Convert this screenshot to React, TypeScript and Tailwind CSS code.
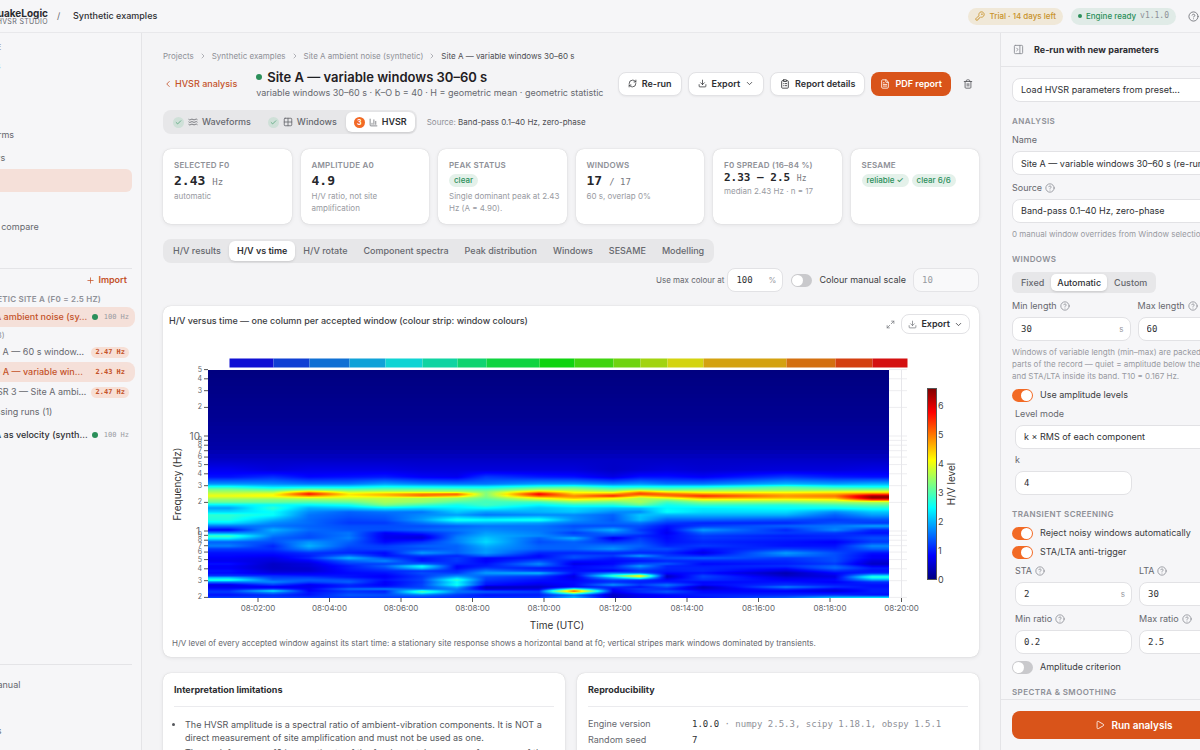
import type { ReactNode } from "react";
import {
  BarChart3,
  Check,
  ChevronDown,
  ChevronLeft,
  ChevronRight,
  ClipboardList,
  Download,
  FileText,
  Grid2x2,
  HelpCircle,
  KeyRound,
  Maximize2,
  PanelRightClose,
  Play,
  Plus,
  RefreshCw,
  Trash2,
  Waves,
} from "lucide-react";

const MONO = "font-['DejaVu_Sans_Mono',monospace]";

/* ---------- H/V vs time data ---------- */

// Start of each accepted window, in chart units
const WINDOW_X = [66, 110, 146, 186, 222, 259, 294, 323, 376, 411, 450, 477, 504, 540, 623, 672, 709];
const WINDOW_COLORS = [
  "#1010d4", "#1040d4", "#1070d4", "#10a2d8", "#10d4d4", "#10d4a2", "#10d470", "#10d440", "#10d410",
  "#40d410", "#70d410", "#a2d410", "#d4d410", "#d4a210", "#d47010", "#d44010", "#d41010",
];

// [y, level of each window in % of the colour scale]
const LEVELS: [number, number[]][] = [
  [30, [0, 0, 0, 0, 0, 0, 0, 0, 0, 0, 0, 0, 0, 0, 0, 0, 0]],
  [80, [2, 2, 2, 2, 2, 2, 2, 2, 2, 2, 2, 2, 2, 2, 2, 2, 2]],
  [108, [4, 4, 4, 4, 4, 4, 4, 4, 4, 4, 4, 4, 4, 4, 4, 4, 4]],
  [120, [7, 7, 7, 7, 7, 7, 7, 7, 7, 7, 7, 7, 7, 7, 7, 7, 7]],
  [130, [11, 9, 10, 10, 10, 9, 9, 9, 9, 9, 7, 8, 9, 8, 9, 9, 10]],
  [137, [14, 17, 13, 14, 15, 12, 11, 18, 15, 14, 10, 14, 14, 12, 18, 15, 14]],
  [144, [27, 26, 24, 24, 28, 25, 24, 24, 28, 28, 25, 27, 24, 24, 30, 28, 30]],
  [147, [40, 35, 36, 36, 39, 38, 37, 37, 43, 45, 39, 39, 39, 39, 46, 41, 39]],
  [150, [50, 46, 51, 48, 49, 49, 48, 46, 55, 54, 49, 54, 49, 51, 51, 51, 52]],
  [152, [54, 54, 72, 57, 58, 57, 56, 50, 72, 61, 58, 74, 64, 60, 60, 62, 62]],
  [154, [58, 61, 87, 65, 70, 76, 79, 50, 89, 68, 73, 82, 78, 73, 69, 71, 79]],
  [156, [61, 63, 74, 63, 68, 76, 70, 50, 80, 74, 85, 69, 76, 84, 73, 76, 97]],
  [158, [56, 56, 58, 58, 57, 55, 53, 48, 63, 70, 65, 55, 61, 72, 69, 71, 98]],
  [160, [51, 50, 51, 52, 55, 53, 50, 45, 54, 60, 57, 54, 50, 60, 59, 61, 80]],
  [162, [48, 48, 46, 48, 54, 52, 46, 44, 44, 52, 49, 54, 44, 51, 52, 54, 55]],
  [165, [36, 38, 37, 39, 50, 44, 39, 44, 37, 41, 41, 48, 39, 43, 41, 44, 47]],
  [168, [28, 42, 30, 32, 36, 34, 36, 38, 32, 34, 32, 32, 37, 36, 38, 38, 40]],
  [172, [34, 38, 26, 22, 24, 24, 32, 28, 30, 32, 26, 26, 38, 34, 34, 26, 32]],
  [175, [42, 38, 24, 21, 22, 26, 28, 24, 26, 26, 22, 32, 30, 30, 30, 22, 28]],
  [180, [40, 30, 23, 19, 20, 28, 40, 38, 40, 27, 21, 31, 22, 22, 20, 18, 20]],
  [183, [35, 26, 23, 18, 18, 24, 30, 30, 28, 24, 22, 24, 18, 16, 16, 20, 18]],
  [186, [24, 24, 22, 20, 20, 20, 22, 24, 24, 20, 20, 20, 14, 18, 22, 24, 28]],
  [190, [12, 30, 23, 21, 20, 22, 24, 26, 24, 22, 30, 18, 12, 28, 16, 26, 16]],
  [193, [26, 27, 21, 24, 12, 16, 22, 28, 25, 18, 24, 20, 11, 22, 18, 18, 14]],
  [196, [44, 24, 20, 24, 11, 10, 24, 30, 26, 22, 18, 16, 13, 18, 15, 16, 18]],
  [198, [38, 22, 20, 25, 11, 9, 25, 32, 22, 30, 10, 18, 13, 18, 16, 16, 20]],
  [202, [22, 20, 27, 22, 13, 17, 25, 34, 20, 22, 17, 20, 14, 16, 14, 12, 18]],
  [206, [25, 16, 30, 20, 18, 22, 22, 30, 22, 22, 24, 22, 16, 18, 14, 14, 26]],
  [209, [18, 17, 26, 18, 19, 20, 22, 28, 22, 22, 27, 20, 20, 14, 18, 16, 22]],
  [213, [14, 14, 17, 16, 13, 28, 22, 28, 16, 16, 16, 16, 16, 10, 28, 20, 14]],
  [216, [13, 12, 15, 24, 14, 18, 16, 22, 13, 20, 18, 28, 18, 16, 24, 20, 12]],
  [218, [12, 10, 16, 31, 20, 14, 18, 13, 14, 20, 15, 18, 20, 22, 18, 20, 12]],
  [221, [11, 9, 12, 22, 26, 14, 18, 12, 20, 14, 13, 14, 16, 16, 16, 20, 9]],
  [224, [14, 7, 9, 18, 19, 22, 16, 14, 26, 10, 13, 20, 21, 13, 15, 18, 7]],
  [226, [12, 7, 9, 15, 22, 38, 13, 15, 22, 13, 15, 28, 16, 15, 17, 22, 11]],
  [228, [12, 7, 8, 15, 20, 34, 13, 18, 15, 13, 16, 23, 16, 16, 14, 23, 15]],
  [231, [14, 8, 8, 14, 16, 18, 16, 24, 18, 14, 12, 17, 15, 16, 9, 17, 14]],
  [233, [13, 10, 11, 13, 14, 20, 18, 28, 31, 14, 24, 22, 13, 14, 5, 13, 16]],
  [236, [18, 17, 15, 14, 12, 18, 26, 22, 19, 10, 44, 66, 7, 19, 7, 10, 36]],
  [237, [28, 18, 18, 14, 12, 18, 30, 20, 17, 10, 34, 54, 7, 19, 9, 10, 42]],
  [240, [42, 22, 22, 20, 14, 19, 42, 18, 14, 12, 19, 18, 13, 17, 12, 13, 28]],
  [242, [24, 26, 19, 22, 12, 18, 37, 16, 13, 13, 17, 15, 15, 13, 14, 12, 17]],
  [245, [10, 18, 11, 16, 12, 19, 39, 14, 10, 13, 27, 18, 24, 13, 17, 15, 14]],
  [247, [11, 11, 11, 16, 15, 19, 30, 6, 7, 13, 17, 14, 20, 6, 25, 17, 14]],
  [249, [14, 18, 12, 23, 25, 22, 25, 8, 10, 40, 13, 18, 16, 8, 17, 12, 15]],
  [251, [17, 37, 12, 18, 16, 42, 24, 19, 17, 82, 12, 16, 20, 13, 12, 8, 15]],
  [252, [18, 28, 14, 18, 16, 45, 24, 21, 18, 68, 11, 17, 21, 13, 13, 11, 15]],
  [255, [14, 17, 14, 21, 20, 24, 18, 14, 15, 24, 7, 11, 13, 15, 16, 17, 14]],
  [258, [19, 19, 18, 18, 18, 18, 17, 17, 18, 32, 7, 11, 13, 14, 22, 34, 38]],
];

const clamp = (v: number) => Math.max(0, Math.min(1, v));

function jet(t: number) {
  const r = clamp(1.5 - Math.abs(4 * t - 3));
  const g = clamp(1.5 - Math.abs(4 * t - 2));
  const b = clamp(1.5 - Math.abs(4 * t - 1));
  return `rgb(${Math.round(r * 255)},${Math.round(g * 255)},${Math.round(b * 255)})`;
}

function levelsAt(y: number) {
  const i = Math.max(1, LEVELS.findIndex(([rowY]) => rowY >= y));
  const [y0, a] = LEVELS[i - 1];
  const [y1, b] = LEVELS[i];
  const f = clamp((y - y0) / (y1 - y0));
  return a.map((v, k) => (v + (b[k] - v) * f) / 100);
}

const PLOT_LEFT = 45;
const PLOT_RIGHT = 726;

function rowStops(y: number) {
  const levels = levelsAt(y);
  const stops: { offset: number; color: string }[] = [];
  WINDOW_X.forEach((x, k) => {
    const last = k === WINDOW_X.length - 1;
    const steps = last ? 1 : 5;
    for (let s = 0; s < steps; s++) {
      const f = s / steps;
      const px = last ? x : x + (WINDOW_X[k + 1] - x) * f;
      const v = last ? levels[k] : levels[k] + (levels[k + 1] - levels[k]) * f;
      stops.push({ offset: (px - PLOT_LEFT) / (PLOT_RIGHT - PLOT_LEFT), color: jet(v) });
    }
  });
  return stops;
}

const ROWS: { y: number; h: number }[] = [];
for (let y = 30; y < 258; ) {
  const h = y < 118 ? 4 : 1;
  ROWS.push({ y, h });
  y += h;
}

const freqY = (f: number) => 96 - 95 * (Math.log10(f) - 1);
const FREQ_TICKS = [
  50, 40, 30, 20, 10, 9, 8, 7, 6, 5, 4, 3, 2, 1, 0.9, 0.8, 0.7, 0.6, 0.5, 0.4, 0.3, 0.2,
];
const TIME_TICKS = ["02", "04", "06", "08", "10", "12", "14", "16", "18", "20"];

function HvTimeChart() {
  return (
    <svg viewBox="0 0 816 292" className="block w-full" role="img" aria-label="H/V versus time">
      <defs>
        {ROWS.map(({ y, h }) => (
          <linearGradient key={y} id={`row-${y}`} x1="0" x2="1" y1="0" y2="0">
            {rowStops(y + h / 2).map((s, i) => (
              <stop key={i} offset={s.offset} stopColor={s.color} />
            ))}
          </linearGradient>
        ))}
        <linearGradient id="scale" x1="0" x2="0" y1="1" y2="0">
          {[0, 0.125, 0.375, 0.625, 0.875, 1].map((t) => (
            <stop key={t} offset={t} stopColor={jet(t)} />
          ))}
        </linearGradient>
      </defs>

      {/* Grid, only visible right of the last window */}
      {FREQ_TICKS.map((f) => (
        <path key={f} d={`M726 ${freqY(f)}H744`} stroke="#ededf0" />
      ))}
      <path d="M738.5 30V258" stroke="#e6e6ea" />

      {/* Window colours */}
      {WINDOW_X.map((x, i) => (
        <rect
          key={x}
          x={x + 0.5}
          y={18.5}
          width={(WINDOW_X[i + 1] ?? 744) - x}
          height={9}
          fill={WINDOW_COLORS[i]}
        />
      ))}

      <g shapeRendering="crispEdges">
        {ROWS.map(({ y, h }) => (
          <rect
            key={y}
            x={PLOT_LEFT}
            y={y}
            width={PLOT_RIGHT - PLOT_LEFT}
            height={h}
            fill={`url(#row-${y})`}
          />
        ))}
      </g>

      {/* Frequency axis */}
      {FREQ_TICKS.map((f) => {
        const major = f === 10 || f === 1;
        const digit = f < 1 ? Math.round(f * 10) : f > 10 ? f / 10 : f;
        return (
          <g key={f}>
            <path d={`M41 ${freqY(f)}H45`} stroke="#555" />
            <text
              x={major ? 37 : 39}
              y={freqY(f) + (major ? 4 : 2)}
              textAnchor="end"
              fontSize={major ? 10 : 7}
              fill="#62656b"
            >
              {major ? f : digit}
            </text>
          </g>
        );
      })}
      <text transform="translate(18 144) rotate(-90)" textAnchor="middle" fontSize={10} fill="#333">
        Frequency (Hz)
      </text>

      {/* Time axis */}
      {TIME_TICKS.map((m, i) => {
        const x = 95 + i * 71.5;
        return (
          <g key={m}>
            <path d={`M${x} 258V262`} stroke="#555" />
            <text x={x} y={271} textAnchor="middle" fontSize={8} fill="#62656b">
              08:{m}:00
            </text>
          </g>
        );
      })}
      <text x={394} y={289} textAnchor="middle" fontSize={10} fill="#333">
        Time (UTC)
      </text>

      {/* Colour scale */}
      <rect x={764.5} y={48.5} width={9} height={191} fill="url(#scale)" stroke="#555" />
      {[0, 1, 2, 3, 4, 5, 6].map((v) => (
        <text key={v} x={775} y={243 - v * 29} fontSize={9} fill="#444">
          {v}
        </text>
      ))}
      <text transform="translate(792 144) rotate(-90)" textAnchor="middle" fontSize={10} fill="#333">
        H/V level
      </text>
    </svg>
  );
}

/* ---------- Small building blocks ---------- */

function Badge({ children }: { children: ReactNode }) {
  return (
    <span className="rounded-full bg-[#e4f1ea] px-[5px] text-[8px] leading-[13px] font-medium whitespace-nowrap text-[#2b8f5a]">
      {children}
    </span>
  );
}

type StatProps = { label: string; children: ReactNode; note?: string; tight?: boolean };

function Stat({ label, children, note, tight }: StatProps) {
  return (
    <div className="h-[75px] rounded-lg bg-white pt-[10px] pr-1 pl-[11px] shadow-[0_0_1px_rgba(0,0,0,0.2),0_1px_4px_rgba(0,0,0,0.08)]">
      <p className="text-[8px] leading-[12px] font-semibold tracking-wide whitespace-nowrap text-[#8e9097]">
        {label}
      </p>
      <div className={`flex items-center gap-[3px] ${tight ? "h-[14px]" : "h-[19px]"}`}>{children}</div>
      {note && <p className="text-[8px] leading-[12px] text-[#989aa1]">{note}</p>}
    </div>
  );
}

function Figure({ value, unit }: { value: string; unit?: string }) {
  return (
    <p className={`text-[13px] font-bold whitespace-nowrap text-[#26272b] ${MONO}`}>
      {value}
      {unit && <span className="ml-[7px] text-[9px] font-normal text-[#777980]">{unit}</span>}
    </p>
  );
}

function SmallButton({ children }: { children: ReactNode }) {
  return (
    <button className="flex h-6 items-center gap-[5px] rounded-lg border border-[#e2e2e5] bg-white px-[9px] text-[9px] font-semibold whitespace-nowrap text-[#2e2f33] shadow-xs">
      {children}
    </button>
  );
}

function Toggle({ label, on = false }: { label: string; on?: boolean }) {
  return (
    <label className="flex h-3 items-center gap-[7px] text-[9px] whitespace-nowrap text-[#3c3d42]">
      <input type="checkbox" role="switch" defaultChecked={on} className="peer sr-only" />
      <span className="h-[13px] w-[21px] rounded-full bg-[#c9c9cc] p-px peer-checked:bg-[#f26a25] peer-checked:*:translate-x-2">
        <span className="block size-[11px] rounded-full bg-white" />
      </span>
      {label}
    </label>
  );
}

const fieldClass =
  "block h-6 w-full appearance-none rounded-lg border border-[#e2e2e5] bg-white px-[8px] text-[9px] text-[#2e2f33] outline-none";

type FieldProps = {
  id: string;
  label: string;
  value: string;
  help?: boolean;
  unit?: string;
  mono?: boolean;
  select?: boolean;
};

function Field({ id, label, value, help, unit, mono, select }: FieldProps) {
  return (
    <div className="flex flex-col gap-[5px]">
      <label
        htmlFor={id}
        className="flex h-3 items-center gap-[3px] text-[9px] whitespace-nowrap text-[#66686e]"
      >
        {label}
        {help && <HelpCircle className="size-[10px] text-[#8e9097]" />}
      </label>
      <div className="relative">
        {select ? (
          <select id={id} className={fieldClass}>
            <option>{value}</option>
          </select>
        ) : (
          <input id={id} defaultValue={value} className={`${fieldClass} ${mono ? MONO : ""}`} />
        )}
        {unit && (
          <span className="absolute top-[6px] right-[7px] text-[8px] leading-[12px] text-[#989aa1]">
            {unit}
          </span>
        )}
      </div>
    </div>
  );
}

function SectionTitle({ children }: { children: ReactNode }) {
  return (
    <h3 className="text-[8px] leading-[12px] font-semibold tracking-wider text-[#8e9097]">
      {children}
    </h3>
  );
}

/* ---------- Page regions ---------- */

function TopBar() {
  return (
    <header className="flex h-[33px] shrink-0 items-center border-b border-[#e8e8eb] bg-[#f6f6f8] pr-[69px]">
      <div className="w-[118px] pt-[2px] text-right">
        <p className="text-[10px] leading-[9px] font-bold text-[#2b2c30]">QuakeLogic</p>
        <p className="text-[7px] leading-[8px] tracking-wider text-[#66686e]">HVSR STUDIO</p>
      </div>
      <span className="ml-[9px] w-4 text-[9px] text-[#66686e]">/</span>
      <p className="text-[9px] font-medium text-[#2e2f33]">Synthetic examples</p>
      <div className="ml-auto flex items-center gap-2 text-[8px] whitespace-nowrap">
        <span className="flex h-[17px] items-center gap-1 rounded-full bg-[#f0e8d8] px-[7px] font-medium text-[#c8922a]">
          <KeyRound className="size-[10px]" />
          Trial · 14 days left
        </span>
        <span className="flex h-[17px] items-center gap-[4px] rounded-full bg-[#e0ebe7] px-[7px] font-medium text-[#2b8f5a]">
          <i className="size-1 rounded-full bg-[#2b8f5a]" />
          Engine ready
          <span className={`font-normal text-[#8e9097] ${MONO}`}>v1.1.0</span>
        </span>
        <button aria-label="Help" className="ml-1">
          <HelpCircle className="size-[11px] text-[#77797f]" />
        </button>
      </div>
    </header>
  );
}

const NAV = ["Projects", "Map", "Import", "Waveforms", "Windows", "HVSR", "Models", "Overlay compare"];

function Run({ name, f0, active }: { name: string; f0: string; active?: boolean }) {
  return (
    <a
      href="#run"
      className={`flex h-5 items-center justify-between rounded-lg pr-[6px] pl-[46px] text-[9px] whitespace-nowrap ${active ? "bg-[#f5e0d9] font-medium text-[#c4532a]" : "text-[#66686e]"}`}
    >
      <span>{name}</span>
      <span
        className={`rounded-full bg-[#f7dfd5] px-1 text-[7px] leading-[11px] font-bold text-[#c4532a] ${MONO}`}
      >
        {f0} Hz
      </span>
    </a>
  );
}

function Recording({ name, active }: { name: string; active?: boolean }) {
  return (
    <a
      href="#recording"
      className={`flex h-5 items-center rounded-lg pr-[6px] pl-[38px] text-[9px] font-medium whitespace-nowrap ${active ? "bg-[#f5e0d9] text-[#c4532a]" : "text-[#2e2f33]"}`}
    >
      <span>{name}</span>
      <i className="mr-[6px] ml-auto size-[6px] rounded-full bg-[#2b8f5a]" />
      <span className={`text-[7px] font-normal text-[#989aa1] ${MONO}`}>100 Hz</span>
    </a>
  );
}

function Sidebar() {
  return (
    <aside className="flex w-[212px] shrink-0 flex-col border-r border-[#e4e4e7] bg-[#f6f6f8] pb-2">
      <p className="mt-2 ml-[18px] h-[13px] text-[8px] leading-[13px] tracking-wider text-[#989aa1]">
        WORKSPACE
      </p>
      <nav className="mr-[9px] ml-3 flex flex-col">
        {NAV.map((item) => (
          <a
            key={item}
            href="#nav"
            className={`flex h-[23px] items-center rounded-md pl-6 text-[9px] ${item === "HVSR" ? "bg-[#f5e0d9] text-[#c4532a]" : "text-[#66686e]"}`}
          >
            {item}
          </a>
        ))}
      </nav>
      <div className="mt-[30px] mr-[9px] flex h-[23px] items-center justify-between border-t border-[#e4e4e7] pr-[5px] pl-[30px]">
        <h3 className="text-[8px] tracking-wide text-[#8e9097]">RECORDS</h3>
        <button className="flex items-center gap-[3px] text-[9px] font-semibold text-[#c4532a]">
          <Plus className="size-[9px]" />
          Import
        </button>
      </div>
      <p className="h-4 pl-[38px] text-[8px] leading-[16px] font-semibold tracking-wide whitespace-nowrap text-[#8e9097]">
        SYNTHETIC SITE A (F0 = 2.5 HZ)
      </p>
      <div className="mr-[6px] ml-2">
        <Recording name="Site A ambient noise (sy…" active />
        <p className="h-[15px] pl-[13px] text-[8px] leading-[17px] text-[#8e9097]">HVSR runs (3)</p>
        <Run name="Site A — 60 s window…" f0="2.47" />
        <Run name="Site A — variable win…" f0="2.43" active />
        <Run name="HVSR 3 — Site A ambi…" f0="2.47" />
        <p className="mb-[3px] h-5 pl-[33px] text-[9px] leading-[20px] text-[#66686e]">Processing runs (1)</p>
        <Recording name="Site A as velocity (synth…" />
      </div>
      <nav className="mt-auto mr-[9px] flex h-[78px] flex-col border-t border-[#e4e4e7] pt-2 pl-[37px] text-[9px] text-[#66686e]">
        {["User manual", "About", "Settings"].map((item) => (
          <a key={item} href="#help" className="h-[23px] leading-[23px]">
            {item}
          </a>
        ))}
      </nav>
    </aside>
  );
}

const TABS = ["H/V results", "H/V vs time", "H/V rotate", "Component spectra", "Peak distribution", "Windows", "SESAME", "Modelling"];

function DoneMark() {
  return (
    <span className="flex size-[11px] items-center justify-center rounded-full bg-[#cfe0d8]">
      <Check className="size-[7px] text-[#2b8f5a]" />
    </span>
  );
}

function Analysis() {
  return (
    <main className="min-w-0 flex-1 overflow-hidden bg-[#f4f4f6] px-[21px] pt-[17px]">
      <nav className="flex h-3 items-center gap-[5px] text-[8px] whitespace-nowrap text-[#8e9097]">
        <a href="#projects">Projects</a>
        <ChevronRight className="size-2" />
        <a href="#examples">Synthetic examples</a>
        <ChevronRight className="size-2" />
        <a href="#noise">Site A ambient noise (synthetic)</a>
        <ChevronRight className="size-2" />
        <span className="text-[#4c4d52]">Site A — variable windows 30–60 s</span>
      </nav>

      <div className="mt-[6px] flex h-[31px] items-center">
        <a href="#hvsr" className="flex items-center gap-[2px] text-[9px] font-medium whitespace-nowrap text-[#c4532a]">
          <ChevronLeft className="size-[10px]" />
          HVSR analysis
        </a>
        <div className="ml-[19px] whitespace-nowrap">
          <h1 className="flex items-center gap-[5px] text-[13px] leading-[17px] font-semibold text-[#1f2023]">
            <i className="size-[6px] rounded-full bg-[#2b8f5a]" />
            Site A — variable windows 30–60 s
          </h1>
          <p className="text-[9px] leading-[13px] text-[#66686e]">
            variable windows 30–60 s · K–O b = 40 · H = geometric mean · geometric statistic
          </p>
        </div>
        <div className="ml-auto flex items-center gap-[6px]">
          <SmallButton>
            <RefreshCw className="size-[9px]" />
            Re-run
          </SmallButton>
          <SmallButton>
            <Download className="size-[9px]" />
            Export
            <ChevronDown className="size-[9px]" />
          </SmallButton>
          <SmallButton>
            <ClipboardList className="size-[10px]" />
            Report details
          </SmallButton>
          <button className="flex h-6 items-center gap-[5px] rounded-lg bg-[#d9541a] px-[9px] text-[9px] font-semibold whitespace-nowrap text-white">
            <FileText className="size-[10px]" />
            PDF report
          </button>
          <button aria-label="Delete" className="px-[6px]">
            <Trash2 className="size-[10px] text-[#55575c]" />
          </button>
        </div>
      </div>

      <div className="mt-[11px] flex h-6 items-center gap-[10px]">
        <div className="flex h-6 items-center rounded-lg bg-[#e7e7e9] p-[2px] text-[9px] font-medium text-[#66686e]">
          <button className="flex items-center gap-1 px-2">
            <DoneMark />
            <Waves className="size-[10px]" />
            Waveforms
          </button>
          <button className="flex items-center gap-1 px-[9px]">
            <DoneMark />
            <Grid2x2 className="size-[10px]" />
            Windows
          </button>
          <button className="flex h-5 items-center gap-1 rounded-md bg-white px-2 font-semibold text-[#2e2f33] shadow-sm">
            <span className="size-[11px] rounded-full bg-[#f26a25] text-center text-[7px] leading-[11px] font-bold text-white">
              3
            </span>
            <BarChart3 className="size-[9px] text-[#66686e]" />
            HVSR
          </button>
        </div>
        <p className="text-[8px] text-[#8e9097]">
          Source: <span className="text-[#4c4d52]">Band-pass 0.1–40 Hz, zero-phase</span>
        </p>
      </div>

      <section className="mt-[15px] grid grid-cols-6 gap-[9px]">
        <Stat label="SELECTED F0" note="automatic">
          <Figure value="2.43" unit="Hz" />
        </Stat>
        <Stat label="AMPLITUDE A0" note="H/V ratio, not site amplification">
          <Figure value="4.9" />
        </Stat>
        <Stat label="PEAK STATUS" note="Single dominant peak at 2.43 Hz (A = 4.90).">
          <Badge>clear</Badge>
        </Stat>
        <Stat label="WINDOWS" note="60 s, overlap 0%">
          <Figure value="17" unit="/ 17" />
        </Stat>
        <Stat label="F0 SPREAD (16–84 %)" note="median 2.43 Hz · n = 17" tight>
          <p className={`text-[11px] font-bold whitespace-nowrap text-[#26272b] ${MONO}`}>
            2.33 – 2.5 <span className="text-[8px] font-normal text-[#777980]">Hz</span>
          </p>
        </Stat>
        <Stat label="SESAME">
          <Badge>reliable ✓</Badge>
          <Badge>clear 6/6</Badge>
        </Stat>
      </section>

      <div className="mt-[15px] flex">
        <div className="flex h-6 items-center rounded-lg bg-[#e7e7e9] px-[2px]">
          {TABS.map((tab) => (
            <button
              key={tab}
              className={`h-5 rounded-md px-2 text-[9px] whitespace-nowrap ${tab === "H/V vs time" ? "bg-white font-semibold text-[#2e2f33] shadow-sm" : "font-medium text-[#66686e]"}`}
            >
              {tab}
            </button>
          ))}
        </div>
      </div>

      <div className="mt-[5px] flex h-6 items-center justify-end text-[9px] text-[#66686e]">
        <label htmlFor="max-colour" className="text-[8px]">
          Use max colour at
        </label>
        <div className="relative mr-2 ml-[3px] w-14">
          <input id="max-colour" defaultValue="100" className={`${fieldClass} ${MONO}`} />
          <span className="absolute top-[6px] right-[7px] text-[8px] leading-[12px] text-[#989aa1]">%</span>
        </div>
        <Toggle label="Colour manual scale" />
        <input
          aria-label="Manual scale"
          disabled
          defaultValue="10"
          className={`ml-[7px] h-6 w-[66px] rounded-lg border border-[#e4e4e7] bg-[#f9f9fa] px-2 text-[#989aa1] ${MONO}`}
        />
      </div>

      <section className="mt-[14px] rounded-lg bg-white pb-2 shadow-[0_0_1px_rgba(0,0,0,0.2),0_1px_4px_rgba(0,0,0,0.08)]">
        <div className="flex h-[34px] items-start justify-between px-[6px] pt-2">
          <h2 className="text-[9px] leading-[14px] font-medium text-[#3c3d42]">
            H/V versus time — one column per accepted window (colour strip: window colours)
          </h2>
          <div className="flex items-center gap-[6px] pr-[3px]">
            <button aria-label="Expand">
              <Maximize2 className="size-[9px] text-[#77797f]" />
            </button>
            <button className="flex h-5 items-center gap-1 rounded-lg border border-[#e2e2e5] bg-white px-[6px] text-[9px] font-semibold text-[#2e2f33]">
              <Download className="size-[9px] text-[#77797f]" />
              Export
              <ChevronDown className="size-[9px]" />
            </button>
          </div>
        </div>
        <HvTimeChart />
        <p className="mt-[5px] px-[9px] text-[8px] leading-[12px] text-[#66686e]">
          H/V level of every accepted window against its start time: a stationary site response shows a
          horizontal band at f0; vertical stripes mark windows dominated by transients.
        </p>
      </section>

      <div className="mt-4 grid grid-cols-2 gap-3 text-[9px]">
        <section className="rounded-lg bg-white px-[11px] pb-3 shadow-[0_0_1px_rgba(0,0,0,0.2),0_1px_4px_rgba(0,0,0,0.08)]">
          <h2 className="h-[34px] border-b border-[#ebebee] leading-[33px] font-bold text-[#2b2c30]">
            Interpretation limitations
          </h2>
          <ul className="mt-[11px] list-disc pl-[11px] leading-[13px] text-[#55575c]">
            <li className="mb-[2px]">
              The HVSR amplitude is a spectral ratio of ambient-vibration components. It is NOT a
              direct measurement of site amplification and must not be used as one.
            </li>
            <li>
              The peak frequency f0 is an estimate of the fundamental resonance frequency of the site
              under the assumptions of the method.
            </li>
          </ul>
        </section>
        <section className="rounded-lg bg-white px-[11px] pb-3 shadow-[0_0_1px_rgba(0,0,0,0.2),0_1px_4px_rgba(0,0,0,0.08)]">
          <h2 className="h-[34px] border-b border-[#ebebee] leading-[33px] font-bold text-[#2b2c30]">
            Reproducibility
          </h2>
          <dl className="mt-[9px] grid grid-cols-[104px_1fr] leading-[16px] whitespace-nowrap text-[#66686e]">
            <dt>Engine version</dt>
            <dd className={`text-[#2e2f33] ${MONO}`}>
              1.0.0 <span className="text-[#8e9097]">· numpy 2.5.3, scipy 1.18.1, obspy 1.5.1</span>
            </dd>
            <dt>Random seed</dt>
            <dd className={`text-[#2e2f33] ${MONO}`}>7</dd>
          </dl>
        </section>
      </div>
    </main>
  );
}

function Parameters() {
  return (
    <aside className="flex w-[268px] shrink-0 flex-col border-l border-[#e4e4e7] bg-[#f6f6f8]">
      <div className="flex h-[34px] shrink-0 items-center gap-[10px] border-b border-[#e4e4e7] pl-3">
        <button aria-label="Collapse panel">
          <PanelRightClose className="size-[11px] text-[#8e9097]" />
        </button>
        <h2 className="text-[9px] font-bold text-[#2b2c30]">Re-run with new parameters</h2>
      </div>

      <form className="flex min-h-0 flex-1 flex-col gap-[13px] overflow-hidden pt-[11px] pr-3 pl-[11px]">
        <select aria-label="Preset" className={`${fieldClass} shrink-0`}>
          <option>Load HVSR parameters from preset...</option>
        </select>

        <section className="flex flex-col gap-[7px]">
          <SectionTitle>ANALYSIS</SectionTitle>
          <Field id="name" label="Name" value="Site A — variable windows 30–60 s (re-run)" />
          <div className="flex flex-col gap-[5px]">
            <Field id="source" label="Source" help select value="Band-pass 0.1–40 Hz, zero-phase" />
            <p className="text-[8px] leading-[12px] whitespace-nowrap text-[#989aa1]">
              0 manual window overrides from Window selection
            </p>
          </div>
        </section>

        <section className="flex flex-col gap-[7px]">
          <SectionTitle>WINDOWS</SectionTitle>
          <div className="flex h-[21px] items-center self-start rounded-md bg-[#e7e7e9] p-[2px] text-[9px] font-medium text-[#66686e]">
            <button type="button" className="px-[7px]">Fixed</button>
            <button type="button" className="h-[17px] rounded-[5px] bg-white px-[6px] text-[#2e2f33] shadow-sm">
              Automatic
            </button>
            <button type="button" className="px-[7px]">Custom</button>
          </div>
          <div className="flex flex-col gap-[5px]">
            <div className="grid grid-cols-2 gap-[7px]">
              <Field id="min-length" label="Min length" help mono unit="s" value="30" />
              <Field id="max-length" label="Max length" help mono unit="s" value="60" />
            </div>
            <p className="text-[8px] leading-[12px] whitespace-nowrap text-[#989aa1]">
              Windows of variable length (min–max) are packed into the quiet
              <br />
              parts of the record — quiet = amplitude below the level
              <br />
              and STA/LTA inside its band. T10 = 0.167 Hz.
            </p>
          </div>
          <Toggle label="Use amplitude levels" on />
          <div className="flex flex-col gap-[5px] pl-[3px]">
            <Field id="level-mode" label="Level mode" select value="k × RMS of each component" />
            <div className="grid grid-cols-2 gap-[7px]">
              <Field id="k" label="k" mono value="4" />
            </div>
          </div>
        </section>

        <section className="flex flex-col gap-[7px]">
          <SectionTitle>TRANSIENT SCREENING</SectionTitle>
          <Toggle label="Reject noisy windows automatically" on />
          <Toggle label="STA/LTA anti-trigger" on />
          <div className="grid grid-cols-2 gap-[7px] pl-[3px]">
            <Field id="sta" label="STA" help mono unit="s" value="2" />
            <Field id="lta" label="LTA" help mono unit="s" value="30" />
            <Field id="min-ratio" label="Min ratio" help mono value="0.2" />
            <Field id="max-ratio" label="Max ratio" help mono value="2.5" />
          </div>
          <Toggle label="Amplitude criterion" />
        </section>

        <section>
          <SectionTitle>SPECTRA &amp; SMOOTHING</SectionTitle>
        </section>
      </form>

      <div className="h-[51px] shrink-0 border-t border-[#e4e4e7] pt-[11px] pr-3 pl-[11px]">
        <button className="flex h-7 w-full items-center justify-center gap-[6px] rounded-lg bg-[#d9541a] text-[10px] font-semibold text-white">
          <Play className="size-[10px]" />
          Run analysis
        </button>
      </div>
    </aside>
  );
}

export default function App() {
  return (
    <div className="h-screen overflow-hidden bg-[#f4f4f6] font-['Inter',sans-serif]">
      {/* The shell is wider than the window on both sides */}
      <div className="-mr-[68px] -ml-[70px] flex h-full flex-col">
        <TopBar />
        <div className="flex min-h-0 flex-1">
          <Sidebar />
          <Analysis />
          <Parameters />
        </div>
      </div>
    </div>
  );
}
